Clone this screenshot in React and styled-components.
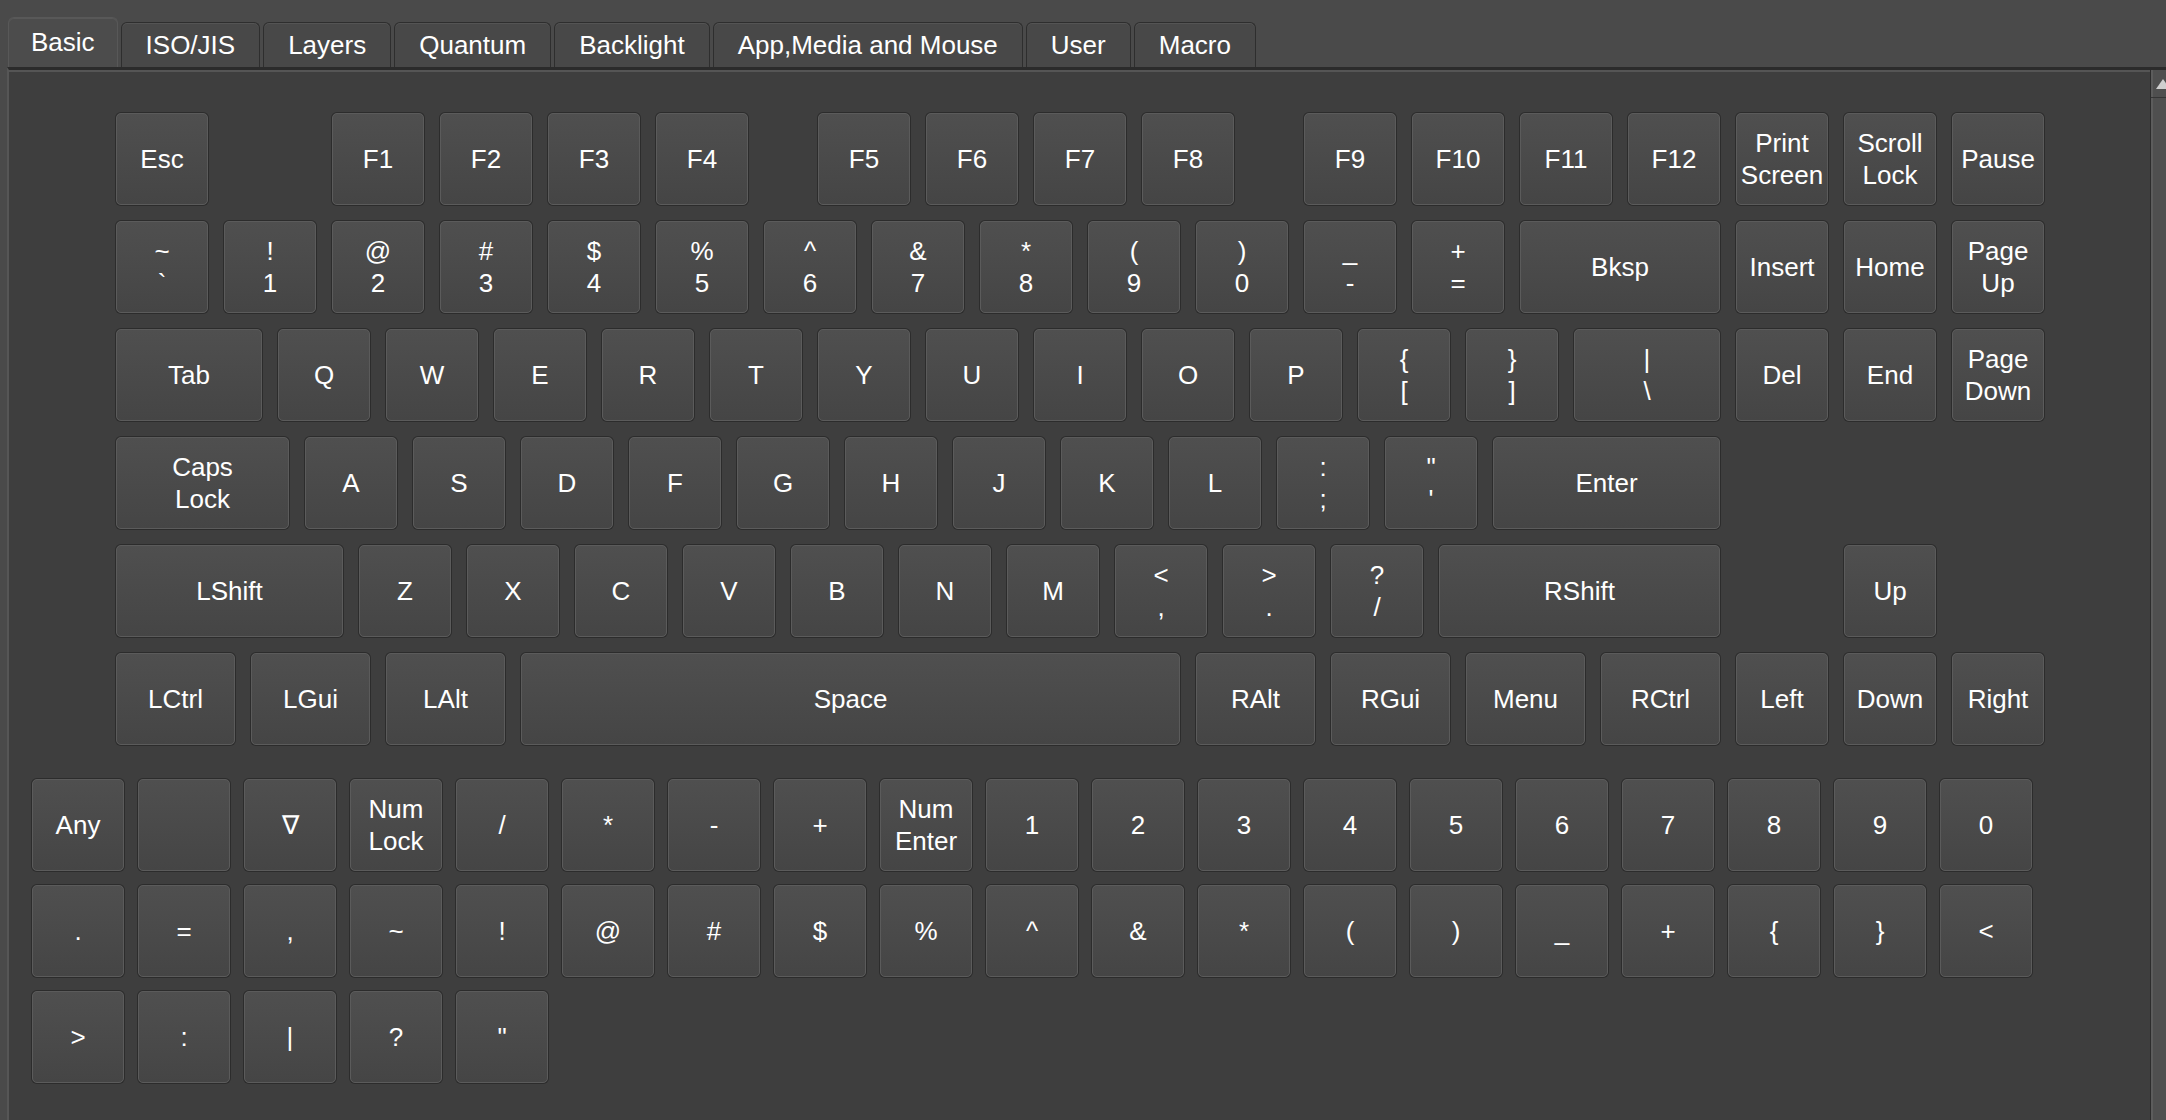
import React from 'react';
import styled, { createGlobalStyle } from 'styled-components';

const UNIT = 108;
const KEY_GAP = 16;

const GlobalStyle = createGlobalStyle`
  html, body {
    margin: 0;
    padding: 0;
    background: #4a4a4a;
  }
  body {
    font-family: "Liberation Sans", Arial, sans-serif;
  }
`;

const Window = styled.div`
  width: 2166px;
  height: 1120px;
  overflow: hidden;
  display: flex;
  flex-direction: column;
  background: #4a4a4a;
  color: #fff;
`;

const TabBar = styled.div`
  display: flex;
  align-items: flex-end;
  gap: 3px;
  height: 67px;
  padding-left: 8px;
  box-sizing: border-box;
  flex-shrink: 0;
`;

const Tab = styled.div`
  height: ${(p) => (p.$active ? 50 : 45)}px;
  padding: ${(p) => (p.$active ? '0 22px' : '0 24px')};
  display: flex;
  align-items: center;
  justify-content: center;
  box-sizing: border-box;
  font-size: 26px;
  border: 1px solid ${(p) => (p.$active ? '#585858' : '#2e2e2e')};
  border-bottom: none;
  border-radius: 6px 6px 0 0;
  background: ${(p) => (p.$active ? '#4c4c4c' : '#484848')};
  box-shadow: inset 0 1px 0 rgba(255, 255, 255, 0.07);
`;

const Panel = styled.div`
  flex: 1;
  display: flex;
  margin-left: 7px;
  margin-right: -20px;
  background: #3e3e3e;
  border-top: 3px solid #2b2b2b;
  border-left: 2px solid #565656;
  box-shadow: inset 0 2px 0 #555;
`;

const Content = styled.div`
  flex: 1;
  padding: 43px 0 0 23px;
`;

const MainBoard = styled.div`
  display: flex;
  flex-direction: column;
  gap: ${KEY_GAP}px;
  margin-left: 84px;
`;

const KeyRow = styled.div`
  display: flex;
  gap: ${KEY_GAP}px;
`;

const Key = styled.div`
  width: ${(p) => p.$u * UNIT - KEY_GAP}px;
  height: 92px;
  box-sizing: border-box;
  flex-shrink: 0;
  display: flex;
  align-items: center;
  justify-content: center;
  text-align: center;
  white-space: pre-line;
  font-size: 26px;
  line-height: 32px;
  color: #fff;
  background: linear-gradient(#4f4f4f, #454545);
  border: 1px solid #5b5b5b;
  border-radius: 5px;
  box-shadow: 0 0 0 1px #2c2c2c;
`;

const Spacer = styled.div`
  width: ${(p) => p.$u * UNIT - KEY_GAP}px;
  flex-shrink: 0;
`;

const ExtraGrid = styled.div`
  display: grid;
  grid-template-columns: repeat(19, 92px);
  grid-auto-rows: 92px;
  gap: 14px;
  margin-top: 34px;
`;

const ExtraKey = styled(Key)`
  width: 92px;
`;

const ScrollBar = styled.div`
  width: 36px;
  flex-shrink: 0;
  box-sizing: border-box;
  background: #4f4f4f;
  border-left: 1px solid #2c2c2c;
  box-shadow: inset 2px 0 0 #5c5c5c;
`;

const ScrollArrow = styled.div`
  height: 27px;
  display: flex;
  align-items: center;
  padding-left: 5px;
  border-bottom: 1px solid #353535;
  box-shadow: inset 2px 0 0 #5c5c5c;
`;

const tabs = ['Basic', 'ISO/JIS', 'Layers', 'Quantum', 'Backlight', 'App,Media and Mouse', 'User', 'Macro'];

const k = (l, u = 1) => ({ l, u });
const gap = (u) => ({ gap: u });

const rows = [
  [k('Esc'), gap(1), k('F1'), k('F2'), k('F3'), k('F4'), gap(0.5), k('F5'), k('F6'), k('F7'), k('F8'), gap(0.5),
    k('F9'), k('F10'), k('F11'), k('F12'), k('Print\nScreen'), k('Scroll\nLock'), k('Pause')],
  [k('~\n`'), k('!\n1'), k('@\n2'), k('#\n3'), k('$\n4'), k('%\n5'), k('^\n6'), k('&\n7'), k('*\n8'), k('(\n9'),
    k(')\n0'), k('_\n-'), k('+\n='), k('Bksp', 2), k('Insert'), k('Home'), k('Page\nUp')],
  [k('Tab', 1.5), k('Q'), k('W'), k('E'), k('R'), k('T'), k('Y'), k('U'), k('I'), k('O'), k('P'), k('{\n['), k('}\n]'),
    k('|\n\\', 1.5), k('Del'), k('End'), k('Page\nDown')],
  [k('Caps\nLock', 1.75), k('A'), k('S'), k('D'), k('F'), k('G'), k('H'), k('J'), k('K'), k('L'), k(':\n;'), k('"\n\''),
    k('Enter', 2.25)],
  [k('LShift', 2.25), k('Z'), k('X'), k('C'), k('V'), k('B'), k('N'), k('M'), k('<\n,'), k('>\n.'), k('?\n/'),
    k('RShift', 2.75), gap(1), k('Up')],
  [k('LCtrl', 1.25), k('LGui', 1.25), k('LAlt', 1.25), k('Space', 6.25), k('RAlt', 1.25), k('RGui', 1.25),
    k('Menu', 1.25), k('RCtrl', 1.25), k('Left'), k('Down'), k('Right')],
];

const extras = [
  'Any', '', '∇', 'Num\nLock', '/', '*', '-', '+', 'Num\nEnter', '1', '2', '3', '4', '5', '6', '7', '8', '9', '0',
  '.', '=', ',', '~', '!', '@', '#', '$', '%', '^', '&', '*', '(', ')', '_', '+', '{', '}', '<',
  '>', ':', '|', '?', '"',
];

export default function App() {
  return (
    <>
      <GlobalStyle />
      <Window>
        <TabBar>
          {tabs.map((t, i) => (
            <Tab key={t} $active={i === 0}>{t}</Tab>
          ))}
        </TabBar>
        <Panel>
          <Content>
            <MainBoard>
              {rows.map((row, ri) => (
                <KeyRow key={ri}>
                  {row.map((item, i) =>
                    item.gap ? <Spacer key={i} $u={item.gap} /> : <Key key={i} $u={item.u}>{item.l}</Key>
                  )}
                </KeyRow>
              ))}
            </MainBoard>
            <ExtraGrid>
              {extras.map((l, i) => (
                <ExtraKey key={i} $u={1}>{l}</ExtraKey>
              ))}
            </ExtraGrid>
          </Content>
          <ScrollBar>
            <ScrollArrow>
              <svg width="14" height="10" viewBox="0 0 14 10">
                <polygon points="7,0 14,10 0,10" fill="#cfcfcf" />
              </svg>
            </ScrollArrow>
          </ScrollBar>
        </Panel>
      </Window>
    </>
  );
}
